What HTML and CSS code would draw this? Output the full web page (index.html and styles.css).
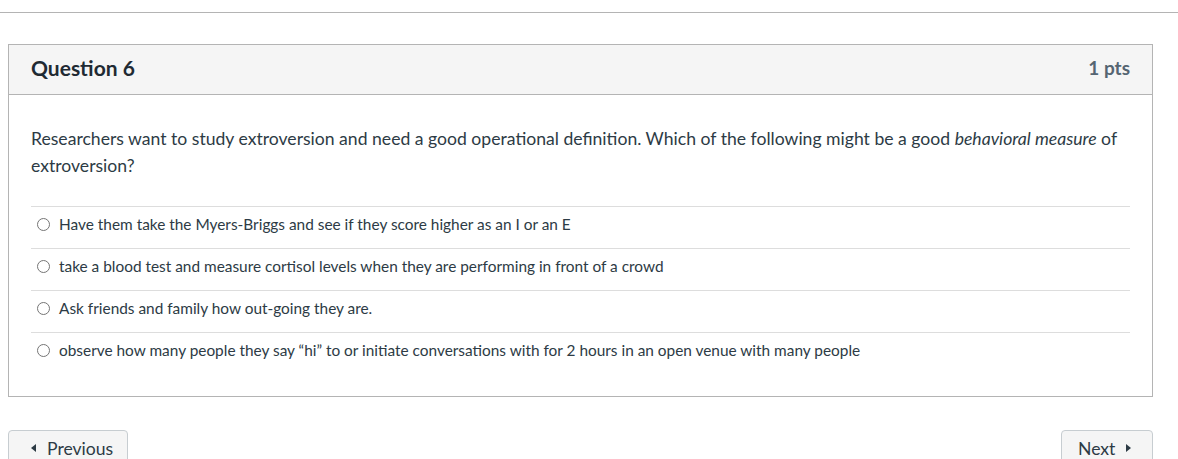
FILE: index.html
```html
<!DOCTYPE html>
<html>
<head>
<meta charset="utf-8">
<link rel="stylesheet" href="styles.css">
</head>
<body>
<div class="top-rule"></div>
<div class="question">
  <div class="q-header">
    <span class="q-title">Question 6</span>
    <span class="q-pts">1 pts</span>
  </div>
  <div class="q-body">
    <p class="q-text">Researchers want to study extroversion and need a good operational definition. Which of the following might be a good <em>behavioral measure</em> of extroversion?</p>
    <div class="answers">
      <label class="answer"><span class="radio"></span><span class="a-text">Have them take the Myers-Briggs and see if they score higher as an I or an E</span></label>
      <label class="answer"><span class="radio"></span><span class="a-text">take a blood test and measure cortisol levels when they are performing in front of a crowd</span></label>
      <label class="answer"><span class="radio"></span><span class="a-text">Ask friends and family how out-going they are.</span></label>
      <label class="answer"><span class="radio"></span><span class="a-text">observe how many people they say “hi” to or initiate conversations with for 2 hours in an open venue with many people</span></label>
    </div>
  </div>
</div>
<div class="nav">
  <button class="btn btn-prev"><span class="tri tri-left"></span>Previous</button>
  <button class="btn btn-next">Next<span class="tri tri-right"></span></button>
</div>
</body>
</html>
```

FILE: styles.css
```css
html, body {
  margin: 0;
  padding: 0;
  background: #fff;
  font-family: Lato, "Liberation Sans", sans-serif;
  color: #2d3b45;
  overflow: hidden;
}
.top-rule {
  height: 12px;
  border-bottom: 1px solid #b4b4b4;
}
.question {
  box-sizing: border-box;
  width: 1145px;
  margin: 31px 0 0 8px;
  border: 1px solid #b4b4b4;
}
.q-header {
  display: flex;
  justify-content: space-between;
  align-items: center;
  height: 49px;
  padding: 0 22px;
  background: #f5f5f5;
  border-bottom: 1px solid #b4b4b4;
}
.q-title {
  font-size: 21px;
  font-weight: 700;
  color: #1f2a33;
  position: relative;
  top: -2px;
}
.q-pts {
  font-size: 19px;
  font-weight: 700;
  color: #556572;
  position: relative;
  top: -2px;
}
.q-body {
  padding: 30px 22px 22px;
}
.q-text {
  margin: 0;
  font-size: 17.6px;
  line-height: 27px;
}
.answers {
  margin-top: 27px;
}
.answer {
  display: flex;
  align-items: center;
  height: 41px;
  border-top: 1px solid #dddddd;
  font-size: 15.4px;
}
.a-text {
  position: relative;
  top: -4px;
}
.radio {
  box-sizing: border-box;
  width: 13px;
  height: 13px;
  border: 1px solid #757575;
  border-radius: 50%;
  margin: 0 9px 0 6px;
  position: relative;
  top: -3px;
  flex: none;
}
.nav {
  display: flex;
  justify-content: space-between;
  width: 1145px;
  margin: 33px 0 0 8px;
}
.btn {
  box-sizing: border-box;
  height: 36px;
  background: #f5f5f5;
  border: 1px solid #c7cdd1;
  border-radius: 4px;
  font-family: Lato, "Liberation Sans", sans-serif;
  font-size: 17.6px;
  color: #2d3b45;
  display: flex;
  align-items: center;
}
.btn-prev {
  width: 120px;
  padding: 0 0 0 22px;
}
.btn-next {
  width: 92px;
  padding: 0 0 0 16px;
}
.tri {
  display: inline-block;
  width: 0;
  height: 0;
  border-top: 4px solid transparent;
  border-bottom: 4px solid transparent;
}
.tri-left {
  border-right: 5px solid #2d3b45;
  margin-right: 11px;
}
.tri-right {
  border-left: 5px solid #2d3b45;
  margin-left: 11px;
}
```
